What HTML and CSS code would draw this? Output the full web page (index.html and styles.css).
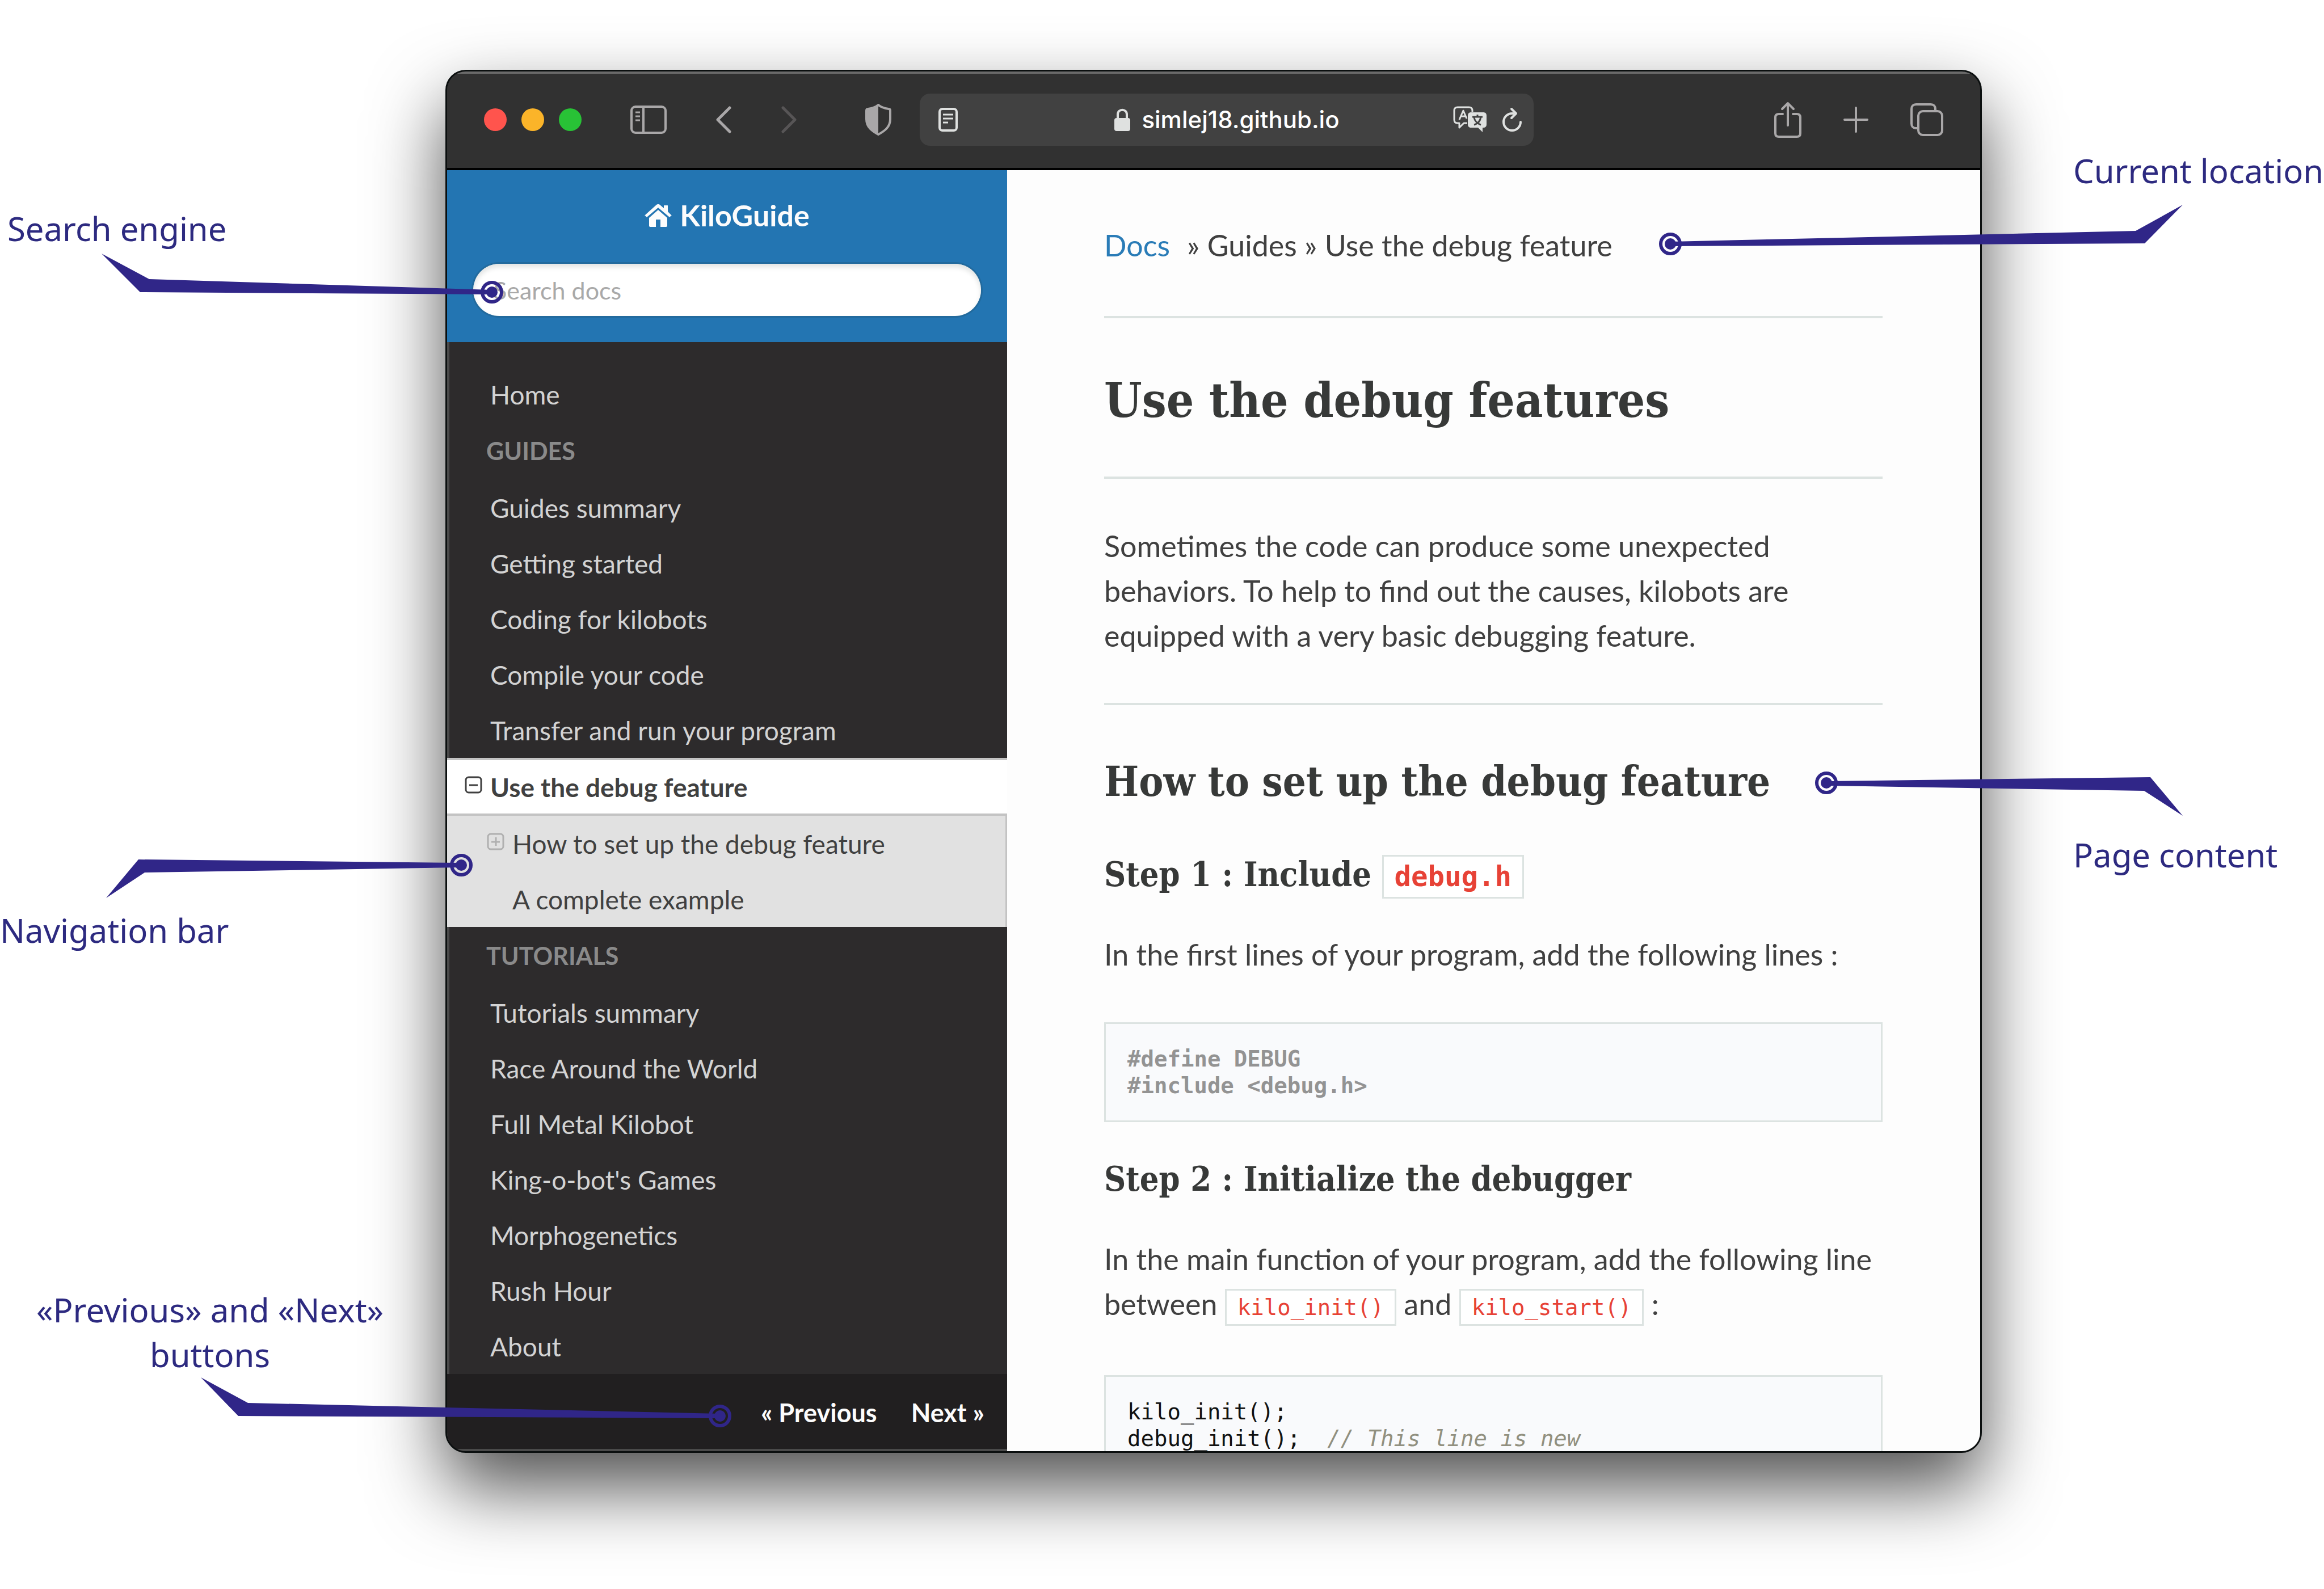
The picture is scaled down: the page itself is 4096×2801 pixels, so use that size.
FILE: index.html
```html
<!DOCTYPE html>
<html lang="en">
<head>
<meta charset="utf-8">
<title>Use the debug feature - KiloGuide</title>
<meta name="viewport" content="width=device-width, initial-scale=1">
<link rel="stylesheet" href="styles.css">
</head>
<body>
<div class="stage">
  <div class="frame">
    <div class="browser">
      <header class="toolbar">
        <div class="lights">
          <button class="light light--close" aria-label="Close"></button>
          <button class="light light--minimise" aria-label="Minimise"></button>
          <button class="light light--zoom" aria-label="Zoom"></button>
        </div>
        <button class="tool tool--panel" aria-label="Show sidebar">
          <svg width="64" height="50" viewBox="0 0 64 50" fill="none" stroke="currentColor" stroke-width="4"><rect x="2" y="2" width="60" height="46" rx="7"/><path d="M23 2v46"/><path d="M9 12h8M9 19h8M9 26h8" stroke-width="3"/></svg>
        </button>
        <button class="tool tool--back" aria-label="Back">
          <svg width="28" height="48" viewBox="0 0 28 48" fill="none" stroke="currentColor" stroke-width="5" stroke-linecap="round" stroke-linejoin="round"><path d="M25 3 4 24l21 21"/></svg>
        </button>
        <button class="tool tool--forward" aria-label="Forward" disabled>
          <svg width="28" height="48" viewBox="0 0 28 48" fill="none" stroke="currentColor" stroke-width="5" stroke-linecap="round" stroke-linejoin="round"><path d="m3 3 21 21L3 45"/></svg>
        </button>
        <button class="tool tool--shield" aria-label="Privacy report">
          <svg width="46" height="56" viewBox="0 0 46 56"><path d="M23 2c6 5 12 6 18 7 2 0 3 1 3 3v15c0 14-10 21-21 27C12 48 2 41 2 27V12c0-2 1-3 3-3 6-1 12-2 18-7z" fill="none" stroke="currentColor" stroke-width="4"/><path d="M23 2v52C12 48 2 41 2 27V12c0-2 1-3 3-3 6-1 12-2 18-7z" fill="currentColor"/></svg>
        </button>
        <div class="address">
          <button class="tool" aria-label="Reader">
            <svg width="34" height="42" viewBox="0 0 34 42" fill="none" stroke="currentColor" stroke-width="4"><rect x="2" y="2" width="30" height="38" rx="5"/><path d="M8 12h18M8 19h18M8 26h9" stroke-width="3"/></svg>
          </button>
          <button class="address__url">
            <svg width="28" height="40" viewBox="0 0 28 40"><rect y="17" width="28" height="23" rx="4" fill="currentColor"/><path d="M6 19v-8c0-11 16-11 16 0v8" fill="none" stroke="currentColor" stroke-width="4"/></svg>
            <span>simlej18.github.io</span>
          </button>
          <button class="tool" aria-label="Translate">
            <svg width="60" height="48" viewBox="0 0 60 48" fill="none" stroke="currentColor" stroke-width="3" stroke-linejoin="round"><path d="M25 30h-6l-8 8v-8H8c-4 0-6-2-6-6V8c0-4 2-6 6-6h20c4 0 6 2 6 6v2"/><path d="m11 24 7-16 6 14M14 18h8"/><path d="M32 11h21c4 0 6 2 6 6v15c0 4-2 6-6 6h-1v8l-8-8H32c-4 0-6-2-6-6V17c0-4 2-6 6-6z" fill="currentColor" stroke="none"/><path d="M34 19h18M43 15v4M37 33c7-2 11-7 12-14M37 20c1 6 6 11 12 13" stroke="#414141"/></svg>
          </button>
          <button class="tool" aria-label="Reload">
            <svg width="36" height="44" viewBox="0 0 36 44" fill="none" stroke="currentColor" stroke-width="4" stroke-linecap="round" stroke-linejoin="round"><path d="M20 11h-2a15 15 0 1 0 15 15"/><path d="m17 3 8 8-8 8"/></svg>
          </button>
        </div>
        <div class="toolbar__end">
          <button class="tool" aria-label="Share">
            <svg width="48" height="64" viewBox="0 0 48 64" fill="none" stroke="currentColor" stroke-width="4" stroke-linecap="round" stroke-linejoin="round"><path d="M15 22H8c-4 0-6 2-6 6v28c0 4 2 6 6 6h32c4 0 6-2 6-6V28c0-4-2-6-6-6h-7"/><path d="M24 42V3M14 13 24 3l10 10"/></svg>
          </button>
          <button class="tool" aria-label="New tab">
            <svg width="44" height="48" viewBox="0 0 44 48" fill="none" stroke="currentColor" stroke-width="4" stroke-linecap="round"><path d="M22 3v42M2 24h40"/></svg>
          </button>
          <button class="tool" aria-label="Show all tabs">
            <svg width="58" height="58" viewBox="0 0 58 58" fill="none" stroke="currentColor" stroke-width="4"><rect x="14" y="14" width="42" height="42" rx="8"/><path d="M14 44h-4c-5 0-8-3-8-8V10c0-5 3-8 8-8h26c5 0 8 3 8 8v4"/></svg>
          </button>
        </div>
      </header>

      <div class="page">
        <nav class="sidebar" aria-label="Documentation">
          <div class="sidebar__search">
            <a class="brand" href="#">
              <svg width="48" height="40" viewBox="0 0 48 40" fill="currentColor"><path d="m24 10 16 14v14c0 1-1 2-2 2H28V27h-8v13H10c-1 0-2-1-2-2V24z"/><path d="M24 0c1 0 2 0 3 1l7 6V3c0-1 0-1 1-1h5c1 0 1 0 1 1v10l6 6c1 0 1 1 0 1l-2 2c0 1-1 1-2 0L24 6 5 22c-1 1-2 1-2 0l-2-2c-1 0-1-1 0-1L21 1c1-1 2-1 3-1z"/></svg>
              <span>KiloGuide</span>
            </a>
            <input class="search" type="search" placeholder="Search docs" aria-label="Search docs">
          </div>
          <div class="menu">
            <a class="menu__link" href="#">Home</a>
            <p class="menu__caption">Guides</p>
            <a class="menu__link" href="#">Guides summary</a>
            <a class="menu__link" href="#">Getting started</a>
            <a class="menu__link" href="#">Coding for kilobots</a>
            <a class="menu__link" href="#">Compile your code</a>
            <a class="menu__link" href="#">Transfer and run your program</a>
            <a class="menu__link menu__link--current" href="#">
              <svg width="31" height="38" viewBox="0 0 31 38" fill="none" stroke="currentColor" stroke-width="3"><rect x="2" y="2" width="27" height="27" rx="5"/><path d="M8 16h15"/></svg>
              <span>Use the debug feature</span>
            </a>
            <div class="submenu">
              <a class="menu__link menu__link--sub menu__link--folded" href="#">
                <svg width="31" height="38" viewBox="0 0 31 38" fill="none" stroke="currentColor" stroke-width="3"><rect x="2" y="2" width="27" height="27" rx="5"/><path d="M8 16h15M16 8v15"/></svg>
                <span>How to set up the debug feature</span>
              </a>
              <a class="menu__link menu__link--sub" href="#">A complete example</a>
            </div>
            <p class="menu__caption">Tutorials</p>
            <a class="menu__link" href="#">Tutorials summary</a>
            <a class="menu__link" href="#">Race Around the World</a>
            <a class="menu__link" href="#">Full Metal Kilobot</a>
            <a class="menu__link" href="#">King-o-bot's Games</a>
            <a class="menu__link" href="#">Morphogenetics</a>
            <a class="menu__link" href="#">Rush Hour</a>
            <a class="menu__link" href="#">About</a>
          </div>
          <div class="pager">
            <a href="#">« Previous</a>
            <a href="#">Next »</a>
          </div>
        </nav>

        <main class="content">
          <div class="crumbs"><a href="#">Docs</a><span>» Guides » Use the debug feature</span></div>
          <hr>
          <h1>Use the debug features</h1>
          <hr>
          <p>Sometimes the code can produce some unexpected behaviors. To help to find out the causes, kilobots are equipped with a very basic debugging feature.</p>
          <hr>
          <h2>How to set up the debug feature</h2>
          <h3>Step 1 : Include <code>debug.h</code></h3>
          <p>In the first lines of your program, add the following lines :</p>
          <pre class="meta">#define DEBUG
#include &lt;debug.h&gt;</pre>
          <h3>Step 2 : Initialize the debugger</h3>
          <p>In the main function of your program, add the following line between <code>kilo_init()</code> and <code>kilo_start()</code> :</p>
          <pre>kilo_init();
debug_init();  <em>// This line is new</em></pre>
        </main>
      </div>
    </div>

    <div class="notes notes--left">
      <svg width="1300" height="2640" viewBox="0 0 1300 2640">
        <g fill="#302688">
          <path d="m179 447 84 45 604 19v8l-620-4z"/><circle cx="867" cy="515" r="10"/>
          <path d="m187 1583 68-45 558-9v-8l-569-6z"/><circle cx="813" cy="1525" r="10"/>
          <path d="m354 2428 83 45 832 19v8l-849-4z"/><circle cx="1269" cy="2496" r="10"/>
        </g>
        <g fill="none" stroke="#302688" stroke-width="6">
          <circle cx="867" cy="515" r="17"/><circle cx="813" cy="1525" r="17"/><circle cx="1269" cy="2496" r="17"/>
        </g>
      </svg>
      <p class="note note--search">Search engine</p>
      <p class="note note--nav">Navigation bar</p>
      <p class="note note--pager">«Previous» and «Next»<br>buttons</p>
    </div>
    <div class="notes notes--right">
      <svg width="1196" height="1600" viewBox="2900 0 1196 1600">
        <g fill="#302688">
          <path d="m3847 361-83 46-820 19v8l836-5z"/><circle cx="2944" cy="430" r="10"/>
          <path d="m3847 1438-57-68-571 7v8l560 9z"/><circle cx="3219" cy="1380" r="10"/>
        </g>
        <g fill="none" stroke="#302688" stroke-width="6">
          <circle cx="2944" cy="430" r="17"/><circle cx="3219" cy="1380" r="17"/>
        </g>
      </svg>
      <p class="note note--location">Current location</p>
      <p class="note note--content">Page content</p>
    </div>
  </div>
</div>
</body>
</html>
```
FILE: styles.css
```css
* { box-sizing: border-box; }

body {
  margin: 0;
  background: #fff;
  color: #404040;
  font-family: Lato, "Liberation Sans", sans-serif;
  font-size: 52px;
  line-height: 79px;
}

p, h1, h2, h3, pre { margin: 0; }
a { color: inherit; text-decoration: none; }
button {
  display: flex;
  padding: 0;
  border: 0;
  background: none;
  color: inherit;
  font: inherit;
}
svg { display: block; flex: none; }

.stage {
  display: grid;
  grid-template-columns: 785px minmax(0, 1fr) 603px;
  padding: 123px 0 240px;
  overflow: hidden;
}
.frame {
  grid-column: 2;
  position: relative;
}
.browser {
  border: 3px solid #0b0f0f;
  border-radius: 36px;
  background: #2d2b2c;
  box-shadow: 0 61px 130px rgba(0, 0, 0, .69);
  overflow: hidden;
}

/* Browser toolbar */
.toolbar {
  display: flex;
  align-items: center;
  height: 174px;
  padding: 0 65px;
  border-bottom: 4px solid #000;
  background: #313131;
  box-shadow: inset 0 4px #6a6a6a;
  color: #a9a7a8;
}
.lights { display: flex; gap: 26px; }
.light { width: 40px; height: 40px; border-radius: 50%; }
.light--close { background: #ff544d; }
.light--minimise { background: #fbb429; }
.light--zoom { background: #28c236; }
.tool--panel { margin-left: 86px; }
.tool--back { margin-left: 86px; }
.tool--forward { margin-left: 88px; color: #575556; }
.tool--shield { margin-left: 120px; }
.address {
  display: flex;
  align-items: center;
  gap: 26px;
  flex: 0 1 1082px;
  height: 92px;
  margin-left: 50px;
  padding: 0 20px 0 33px;
  border-radius: 18px;
  background: #414141;
  color: #dfe1e0;
}
.address__url {
  flex: 1;
  justify-content: center;
  align-items: center;
  gap: 20px;
  padding-left: 76px;
  font: 500 42px/48px Inter, Roboto, sans-serif;
}
.address__url span { color: #fff; }
.toolbar__end {
  display: flex;
  align-items: center;
  gap: 74px;
  margin-left: auto;
}

.page {
  display: grid;
  grid-template-columns: 987px minmax(0, 1fr);
}

/* Documentation sidebar */
.sidebar { box-shadow: inset 4px 0 #4a4a4a; }
.sidebar__search {
  display: flex;
  flex-direction: column;
  align-items: center;
  gap: 46px;
  padding: 40px 46px 46px;
  background: #2375b2;
  color: #fcfcfc;
}
.brand {
  display: flex;
  align-items: center;
  gap: 14px;
  font-weight: 700;
}
.search {
  width: 100%;
  height: 92px;
  padding: 0 36px;
  border: 0;
  border-radius: 46px;
  background: #fff;
  box-shadow: inset 0 6px 8px #e2e4e3, 0 0 0 3px #226a9d;
  color: #404040;
  font: 43px/48px Lato, sans-serif;
}
.search::placeholder { color: #a9a9a9; opacity: 1; }
.menu {
  padding-top: 43px;
  color: #d3d3d3;
  font-size: 46px;
}
.menu__link {
  display: flex;
  align-items: center;
  height: 98px;
  padding-left: 76px;
}
.menu__caption {
  padding-left: 69px;
  color: #8a8a8a;
  font-size: 43px;
  font-weight: 700;
  line-height: 102px;
  text-transform: uppercase;
}
.menu__link--current {
  gap: 14px;
  height: 102px;
  padding-left: 31px;
  border: solid #c3c3c3;
  border-width: 4px 0;
  background: #fff;
  color: #404040;
  font-weight: 700;
}
.submenu {
  border-right: 3px solid #c3c3c3;
  background: #e1e1e1;
  color: #404040;
}
.menu__link--sub { padding-left: 115px; }
.menu__link--folded { gap: 14px; padding-left: 70px; }
.menu__link--folded svg { color: #b0b0b0; }
.pager {
  display: flex;
  align-items: center;
  justify-content: flex-end;
  gap: 60px;
  height: 136px;
  padding: 4px 40px 0 0;
  border-bottom: 4px solid #4a4a4a;
  background: #211f20;
  color: #fcfcfc;
  font-size: 45px;
  font-weight: 700;
}

/* Article: takes the sidebar's height and clips the rest */
.content {
  height: 0;
  min-height: 100%;
  padding: 93px 172px 0 171px;
  background: #fdfdfd;
  overflow: hidden;
}
.crumbs { display: flex; gap: 30px; }
.crumbs a { color: #2a7cb7; }
hr {
  height: 4px;
  margin: 79px 0;
  border: 0;
  background: #dce3e1;
}
.crumbs + hr { margin: 85px 0 0; }
h1, h2, h3 {
  color: #373938;
  font-family: "Roboto Slab", "DejaVu Serif Condensed", "DejaVu Serif", serif;
  font-weight: 700;
  line-height: 80px;
}
h1 { margin-top: 104px; font-size: 85px; }
h1 + hr { margin-top: 95px; }
h2 { margin-top: 95px; font-size: 72px; }
h3 { margin-top: 84px; font-size: 59px; }
h3 + p { margin-top: 61px; }
pre + h3 { margin-top: 61px; }
code, pre { font-family: "DejaVu Sans Mono", monospace; }
code {
  padding: 7px 19px;
  border: 3px solid #dce3e1;
  background: #fff;
  color: #e74236;
  font-size: 39px;
  white-space: nowrap;
}
h3 code { font-size: 49px; line-height: 49px; }
pre {
  margin-top: 80px;
  padding: 38px;
  border: 3px solid #dce3e1;
  background: #f9fafc;
  color: #111;
  font-size: 39px;
  line-height: 47px;
}
pre em { color: #91907f; }
.meta { color: #939393; font-weight: 700; }

/* Notes pinned over the window */
.notes {
  position: absolute;
  top: -123px;
  pointer-events: none;
}
.notes--left { left: -785px; width: 1300px; }
.notes--right { right: -603px; width: 1196px; }
.note {
  position: absolute;
  color: #2d2a80;
  font-family: "Noto Sans", sans-serif;
  font-size: 58px;
  white-space: nowrap;
}
.note--search { top: 363px; left: 13px; }
.note--nav { top: 1600px; left: 0; }
.note--pager { top: 2269px; left: 64px; text-align: center; }
.note--location { top: 261px; left: 754px; }
.note--content { top: 1467px; left: 754px; }
```
